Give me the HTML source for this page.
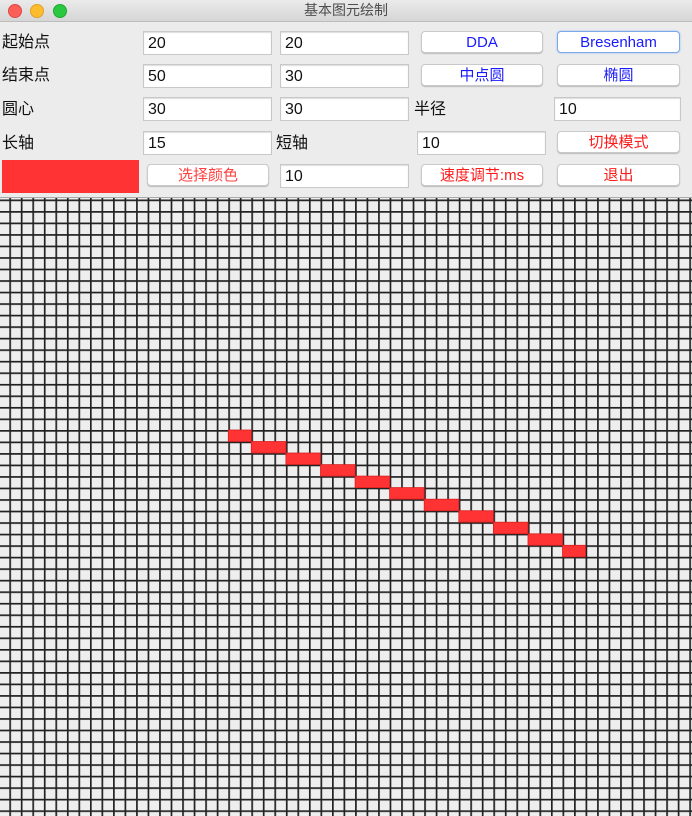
<!DOCTYPE html>
<html><head><meta charset="utf-8"><style>
body{margin:0;width:692px;height:816px;overflow:hidden;background:#ececec;font-family:"Liberation Sans","Noto Sans CJK SC",sans-serif;position:relative}
.t{position:absolute;top:0;left:0;width:692px;height:21px;background:linear-gradient(#ebebeb,#d6d6d6);border-bottom:1px solid #bdbdbd;text-align:center;font-size:14px;line-height:20px;color:#4d4d4d}
.d{position:absolute;top:4px;width:12px;height:12px;border-radius:50%}
.l{position:absolute;font-size:16px;color:#111;line-height:20px}
.f{position:absolute;height:22px;background:#fff;border:1px solid #c8c8c8;box-shadow:inset 0 1px 1px #ddd;font-size:16px;line-height:24px;padding-left:4px;box-sizing:content-box;color:#111}
.b{position:absolute;height:20px;background:#fff;border:1px solid #c9c9c9;border-radius:4px;box-shadow:0 1px 1px #bbb;text-align:center;font-size:15px;line-height:21px}
.blue{color:#1a1aff}.red{color:#ff1a1a}
</style></head><body>
<div class="t">基本图元绘制</div>
<div class="d" style="left:8px;background:#fc5f57;border:0.5px solid #de4a43"></div>
<div class="d" style="left:30px;background:#fdbc2e;border:0.5px solid #dea123"></div>
<div class="d" style="left:53px;background:#29c840;border:0.5px solid #1ea932"></div>

<div class="l" style="left:2px;top:33px">起始点</div>
<div class="l" style="left:2px;top:66px">结束点</div>
<div class="l" style="left:2px;top:100px">圆心</div>
<div class="l" style="left:2px;top:134px">长轴</div>
<div class="l" style="left:276px;top:134px">短轴</div>
<div class="l" style="left:414px;top:100px">半径</div>

<div class="f" style="left:143px;top:31px;width:123px">20</div>
<div class="f" style="left:280px;top:31px;width:123px">20</div>
<div class="f" style="left:143px;top:64px;width:123px">50</div>
<div class="f" style="left:280px;top:64px;width:123px">30</div>
<div class="f" style="left:143px;top:97px;width:123px">30</div>
<div class="f" style="left:280px;top:97px;width:123px">30</div>
<div class="f" style="left:554px;top:97px;width:121px">10</div>
<div class="f" style="left:143px;top:131px;width:123px">15</div>
<div class="f" style="left:417px;top:131px;width:123px">10</div>
<div class="f" style="left:280px;top:164px;width:123px">10</div>

<div class="b blue" style="left:421px;top:31px;width:120px">DDA</div>
<div class="b blue" style="left:557px;top:31px;width:121px;border-color:#7aa8e8;box-shadow:0 0 2px #9cc0f0">Bresenham</div>
<div class="b blue" style="left:421px;top:64px;width:120px">中点圆</div>
<div class="b blue" style="left:557px;top:64px;width:121px">椭圆</div>
<div class="b red" style="left:557px;top:131px;width:121px">切换模式</div>
<div class="b red" style="left:147px;top:164px;width:120px;color:#ff4040">选择颜色</div>
<div class="b red" style="left:421px;top:164px;width:120px">速度调节:ms</div>
<div class="b red" style="left:557px;top:164px;width:121px">退出</div>
<div style="position:absolute;left:2px;top:160px;width:137px;height:33px;background:#ff3333"></div>
<div style="position:absolute;left:0;top:197px;width:692px;height:1px;background:#aaa"></div>

<svg style="position:absolute;left:0;top:0" width="692" height="816">
<defs>
<pattern id="g" x="9.3" y="199.5" width="11.525" height="11.525" patternUnits="userSpaceOnUse">
<rect x="-1" y="-1" width="13" height="13" fill="#eeeeee"/>
<rect x="0" y="0" width="1.7" height="11.525" fill="#222"/>
<rect x="0" y="0" width="11.525" height="1.7" fill="#222"/>
</pattern>
</defs>
<rect x="0" y="198" width="692" height="618" fill="url(#g)"/>
<g fill="#ff3333" stroke="#d82020" stroke-width="0.8">
<rect x="228.3" y="430" width="23" height="11.5"/>
<rect x="251.3" y="441.5" width="34.6" height="11.5"/>
<rect x="285.9" y="453" width="34.6" height="11.5"/>
<rect x="320.5" y="464.6" width="34.6" height="11.5"/>
<rect x="355.1" y="476.1" width="34.6" height="11.5"/>
<rect x="389.6" y="487.6" width="34.6" height="11.5"/>
<rect x="424.2" y="499.2" width="34.6" height="11.5"/>
<rect x="458.8" y="510.7" width="34.6" height="11.5"/>
<rect x="493.4" y="522.2" width="34.6" height="11.5"/>
<rect x="528" y="533.8" width="34.6" height="11.5"/>
<rect x="562.5" y="545.3" width="23" height="11.5"/>
</g>
</svg>
</body></html>
